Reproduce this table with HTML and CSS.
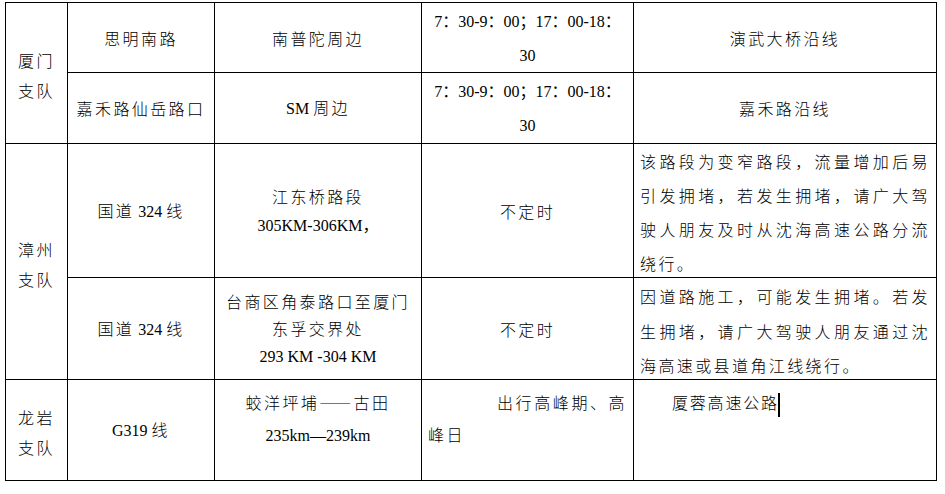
FILE: index.html
```html
<!DOCTYPE html>
<html lang="zh-CN">
<head>
<meta charset="utf-8">
<title>路段表</title>
<link rel="stylesheet" href="styles.css">
</head>
<body>
<table class="grid">
  <colgroup>
    <col class="w1"><col class="w2"><col class="w3"><col class="w4"><col class="w5">
  </colgroup>
  <tr class="r1">
    <td rowspan="2" class="unit">厦门<br>支队</td>
    <td>思明南路</td>
    <td>南普陀周边</td>
    <td class="time"><span class="lat">7：30-9：00；17：00-18：</span><br><span class="lat">30</span></td>
    <td>演武大桥沿线</td>
  </tr>
  <tr class="r2">
    <td>嘉禾路仙岳路口</td>
    <td><span class="lat">SM </span>周边</td>
    <td class="time"><span class="lat">7：30-9：00；17：00-18：</span><br><span class="lat">30</span></td>
    <td>嘉禾路沿线</td>
  </tr>
  <tr class="r3">
    <td rowspan="2" class="unit">漳州<br>支队</td>
    <td>国道<span class="lat"> 324 </span>线</td>
    <td class="place">江东桥路段<br><span class="lat">305KM-306KM，</span></td>
    <td>不定时</td>
    <td class="note"><div class="note-body tall">该路段为变窄路段，流量增加后易引发拥堵，若发生拥堵，请广大驾驶人朋友及时从沈海高速公路分流绕行。</div></td>
  </tr>
  <tr class="r4">
    <td>国道<span class="lat"> 324 </span>线</td>
    <td class="place tight">台商区角泰路口至厦门<br>东孚交界处<br><span class="lat">293 KM -304 KM</span></td>
    <td>不定时</td>
    <td class="note"><div class="note-body short">因道路施工，可能发生拥堵。若发生拥堵，请广大驾驶人朋友通过沈海高速或县道角江线绕行。</div></td>
  </tr>
  <tr class="r5">
    <td class="unit">龙岩<br>支队</td>
    <td><span class="lat">G319 </span>线</td>
    <td class="top">蛟洋坪埔——古田<br><span class="lat">235km—239km</span></td>
    <td class="top indent-wide">出行高峰期、高峰日</td>
    <td class="top indent-two">厦蓉高速公路<span class="caret"></span></td>
  </tr>
</table>
</body>
</html>
```

FILE: styles.css
```css
html, body {
  margin: 0;
  padding: 0;
  background: #ffffff;
}

.grid {
  border-collapse: collapse;
  table-layout: fixed;
  width: 931px;
  margin: 2px 0 0 5px;
  font-family: "Noto Sans CJK SC", sans-serif;
  font-size: 16px;
  font-weight: 300;
  letter-spacing: 2.4px;
  color: #000000;
}

.w1 { width: 62px; }
.w2 { width: 147px; }
.w3 { width: 207px; }
.w4 { width: 212px; }
.w5 { width: 303px; }

.grid td {
  border: 1.5px solid #000000;
  padding: 0 6px;
  text-align: center;
  vertical-align: middle;
  line-height: 30px;
  overflow: hidden;
}

.r1 { height: 70px; }
.r2 { height: 71px; }
.r3 { height: 134px; }
.r4 { height: 102px; }
.r5 { height: 101px; }

.lat {
  font-family: "Liberation Serif", "Noto Sans CJK SC", serif;
  font-weight: 400;
  letter-spacing: 0;
}

.grid td.unit {
  padding-top: 4px;
}

.grid td.time {
  line-height: 33px;
  padding-top: 0;
}

.grid td.place {
  line-height: 28px;
}

.grid td.tight {
  line-height: 27px;
}

.grid td.note {
  text-align: justify;
  vertical-align: top;
  padding: 0 6px;
}

.note-body.tall {
  height: 132px;
  line-height: 34px;
}

.note-body.short {
  height: 99px;
  line-height: 34.5px;
  padding-top: 1px;
}

.grid td.top {
  vertical-align: top;
  padding-top: 6px;
  line-height: 32px;
}

.grid td.indent-wide {
  text-align: justify;
  text-indent: 69px;
}

.grid td.indent-two {
  text-align: left;
  text-indent: 32px;
  letter-spacing: 1.8px;
}

.caret {
  display: inline-block;
  width: 0;
  height: 24px;
  border-left: 2px solid #000000;
  vertical-align: middle;
  margin-left: -1px;
}
```
